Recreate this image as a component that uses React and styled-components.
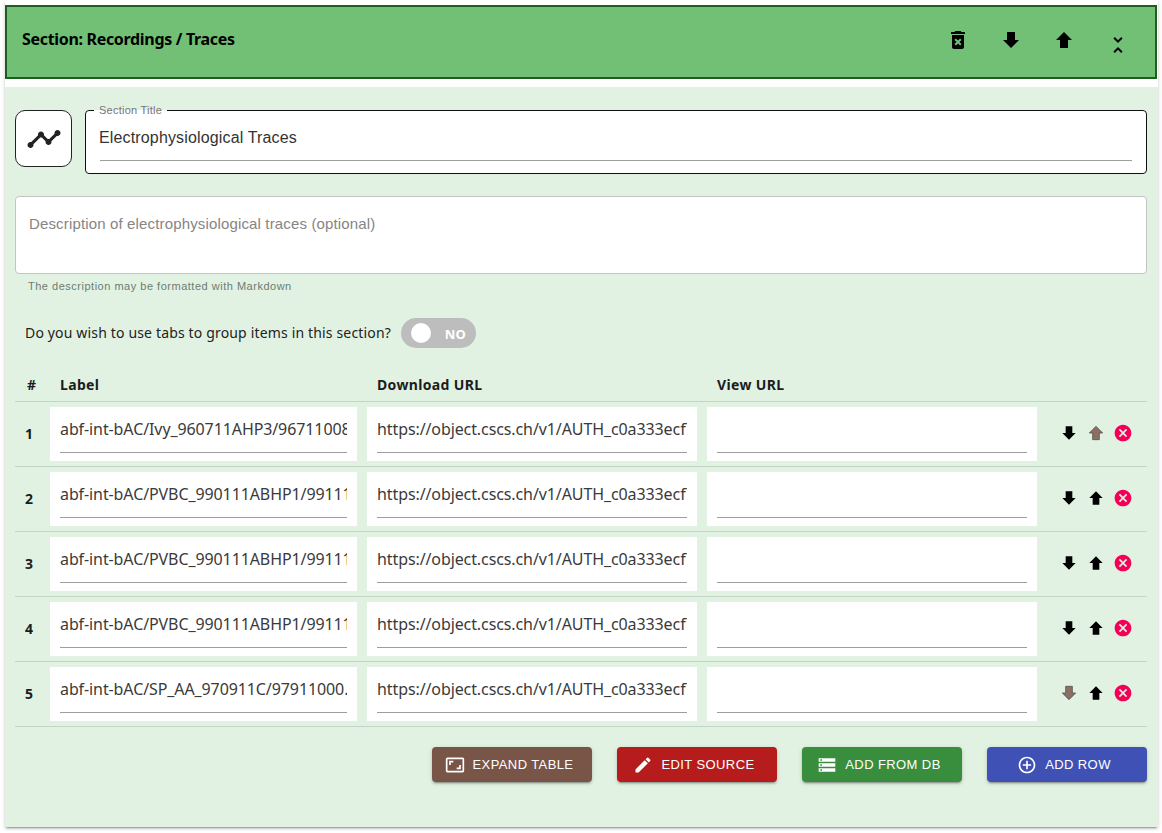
import React from "react";
import styled, { createGlobalStyle } from "styled-components";
import {
  MdDeleteForever,
  MdForward,
  MdUnfoldLess,
  MdCancel,
  MdTimeline,
  MdEdit,
  MdAddCircleOutline,
  MdStorage,
  MdAspectRatio,
} from "react-icons/md";

const Global = createGlobalStyle`
  html, body { margin: 0; padding: 0; background: #fff; }
  body { font-family: "Liberation Sans", Arial, sans-serif; height: 833px; overflow: hidden; }
  * { box-sizing: border-box; }
`;

const ui = `"Noto Sans", "Open Sans", sans-serif`;

const Paper = styled.div`
  margin: 0 4px 0 5px;
  height: 827px;
  padding-top: 5px;
  background: #fff;
  box-shadow: 0 3px 1px -2px rgba(0,0,0,.2), 0 2px 2px 0 rgba(0,0,0,.14), 0 1px 5px 0 rgba(0,0,0,.12);
  display: flex;
  flex-direction: column;
`;

const Header = styled.header`
  height: 74px;
  margin: 0 1px 8px 0;
  border: 2px solid #1b5e20;
  background: #71c076;
  padding: 0 15px;
  display: flex;
  justify-content: space-between;
`;

const HeaderTitle = styled.h2`
  margin: 22px 0 0;
  font: 700 16px/20px ${ui};
  letter-spacing: -.32px;
  color: #000;
`;

const HeaderActions = styled.div`
  display: flex;
  gap: 29px;
  padding: 21px 10px 0 0;
  svg { display: block; font-size: 24px; color: #000; }
`;

const Body = styled.div`
  flex: 1;
  background: #e1f2e3;
  padding: 23px 11px 0 10px;
  display: flex;
  flex-direction: column;
`;

const TitleRow = styled.div`
  display: flex;
  gap: 13px;
  align-items: flex-start;
`;

const IconBox = styled.div`
  width: 57px;
  height: 57px;
  flex: none;
  border: 1px solid #222;
  border-radius: 10px;
  background: #fff;
  display: flex;
  align-items: center;
  justify-content: center;
  color: #222;
  svg { font-size: 36px; }
`;

const TitleField = styled.fieldset`
  flex: 1;
  margin: -6px 0 0;
  padding: 0 14px;
  height: 70px;
  border: 1px solid #111;
  border-radius: 4px;
  background: #fff;
  min-width: 0;
  legend {
    padding: 0 5px;
    margin-left: -6px;
    font-size: 11px;
    line-height: 12px;
    letter-spacing: .25px;
    color: #757575;
  }
  div {
    font-size: 16px;
    line-height: 20px;
    letter-spacing: .15px;
    text-indent: -1px;
    color: #333;
    height: 45px;
    padding-top: 12px;
    border-bottom: 1px solid #9e9e9e;
  }
`;

const DescBox = styled.div`
  margin-top: 22px;
  height: 78px;
  background: #fff;
  border: 1px solid #c4c4c4;
  border-radius: 4px;
  padding: 17px 13px 0;
  font-size: 15px;
  line-height: 20px;
  letter-spacing: .15px;
  color: #858585;
`;

const Helper = styled.p`
  margin: 5px 0 0 13px;
  font-size: 11px;
  line-height: 14px;
  letter-spacing: .51px;
  color: #6f7b70;
`;

const ToggleRow = styled.div`
  margin-top: 25px;
  padding-left: 10px;
  display: flex;
  align-items: center;
  gap: 10px;
  font: 400 14px/30px ${ui};
  letter-spacing: .16px;
  color: #222;
`;

const Toggle = styled.div`
  width: 75px;
  height: 30px;
  border-radius: 15px;
  background: #bdbdbd;
  padding: 0 10px;
  display: flex;
  align-items: center;
  justify-content: space-between;
  &::before { content: ""; width: 20px; height: 20px; border-radius: 50%; background: #fff; }
  span { font: 700 13px/16px ${ui}; color: #fff; padding-top: 2px; }
`;

const Cols = `display: grid; grid-template-columns: 25px 307px 330px 330px 1fr; column-gap: 10px;`;

const HeadRow = styled.div`
  ${Cols}
  margin-top: 22px;
  height: 32px;
  border-bottom: 1px solid #c3d6c5;
  font: 700 14px/30px ${ui};
  letter-spacing: .35px;
  color: #1c1c1c;
  span:nth-child(n+2) { padding-left: 10px; }
  span:first-child { padding-left: 12px; }
`;

const Row = styled.div`
  ${Cols}
  height: 65px;
  padding-top: 5px;
  border-bottom: 1px solid #c3d6c5;
`;

const Num = styled.div`
  font: 700 14px/54px ${ui};
  padding-left: 10px;
  color: #1c1c1c;
`;

const Cell = styled.div`
  height: 54px;
  background: #fff;
  padding: 0 10px;
  div {
    height: 46px;
    border-bottom: 1px solid #9e9e9e;
    font: 400 16px/44px ${ui};
    color: #3a3a3a;
    white-space: nowrap;
    overflow: hidden;
    letter-spacing: -.1px;
  }
`;

const RowActions = styled.div`
  display: flex;
  align-items: center;
  gap: 7px;
  height: 52px;
  padding-left: 12px;
`;

const Arrow = styled(MdForward)`
  font-size: 20px;
  flex: none;
  transform: rotate(${(p) => (p.$up ? -90 : 90)}deg);
  color: ${(p) => (p.$off ? "#8d6e63" : "#000")};
  path:last-child {
    stroke: ${(p) => (p.$off ? "#555" : "none")};
    stroke-width: 1;
  }
`;

const Remove = styled(MdCancel)`
  font-size: 20px;
  flex: none;
  color: #f50057;
`;

const ButtonRow = styled.div`
  margin-top: 20px;
  display: flex;
  justify-content: flex-end;
  gap: 25px;
`;

const Button = styled.button`
  width: 160px;
  flex: none;
  height: 35px;
  border: 0;
  border-radius: 4px;
  background: ${(p) => p.$bg};
  color: #fff;
  font: 400 13px/16px "Liberation Sans", Arial, sans-serif;
  letter-spacing: .4px;
  text-transform: uppercase;
  display: flex;
  align-items: center;
  justify-content: center;
  gap: 8px;
  padding: 0 6px 0 0;
  box-shadow: 0 3px 1px -2px rgba(0,0,0,.2), 0 2px 2px 0 rgba(0,0,0,.14), 0 1px 5px 0 rgba(0,0,0,.12);
  svg { font-size: 20px; flex: none; }
`;

const rows = [
  "abf-int-bAC/Ivy_960711AHP3/96711008.abf",
  "abf-int-bAC/PVBC_990111ABHP1/99111002.abf",
  "abf-int-bAC/PVBC_990111ABHP1/99111003.abf",
  "abf-int-bAC/PVBC_990111ABHP1/99111004.abf",
  "abf-int-bAC/SP_AA_970911C/97911000.abf",
];
const url = "https://object.cscs.ch/v1/AUTH_c0a333ecf7c045809321ce9d9ecdfdea/sp6";

export default function App() {
  return (
    <>
      <Global />
      <Paper>
        <Header>
          <HeaderTitle>Section: Recordings / Traces</HeaderTitle>
          <HeaderActions>
            <MdDeleteForever />
            <MdForward style={{ transform: "rotate(90deg)" }} />
            <MdForward style={{ transform: "rotate(-90deg)" }} />
            <MdUnfoldLess style={{ marginTop: 5, marginLeft: 1 }} />
          </HeaderActions>
        </Header>
        <Body>
          <TitleRow>
            <IconBox><MdTimeline /></IconBox>
            <TitleField>
              <legend>Section Title</legend>
              <div>Electrophysiological Traces</div>
            </TitleField>
          </TitleRow>
          <DescBox>Description of electrophysiological traces (optional)</DescBox>
          <Helper>The description may be formatted with Markdown</Helper>
          <ToggleRow>
            Do you wish to use tabs to group items in this section?
            <Toggle><span>NO</span></Toggle>
          </ToggleRow>
          <HeadRow>
            <span>#</span>
            <span>Label</span>
            <span>Download URL</span>
            <span>View URL</span>
            <span />
          </HeadRow>
          {rows.map((label, i) => (
            <Row key={label}>
              <Num>{i + 1}</Num>
              <Cell><div>{label}</div></Cell>
              <Cell><div>{url}</div></Cell>
              <Cell><div /></Cell>
              <RowActions>
                <Arrow $off={i === rows.length - 1} />
                <Arrow $up $off={i === 0} />
                <Remove />
              </RowActions>
            </Row>
          ))}
          <ButtonRow>
            <Button $bg="#795548"><MdAspectRatio />Expand Table</Button>
            <Button $bg="#b71c1c"><MdEdit />Edit Source</Button>
            <Button $bg="#388e3c"><MdStorage />Add from DB</Button>
            <Button $bg="#3f51b5"><MdAddCircleOutline />Add Row</Button>
          </ButtonRow>
        </Body>
      </Paper>
    </>
  );
}
